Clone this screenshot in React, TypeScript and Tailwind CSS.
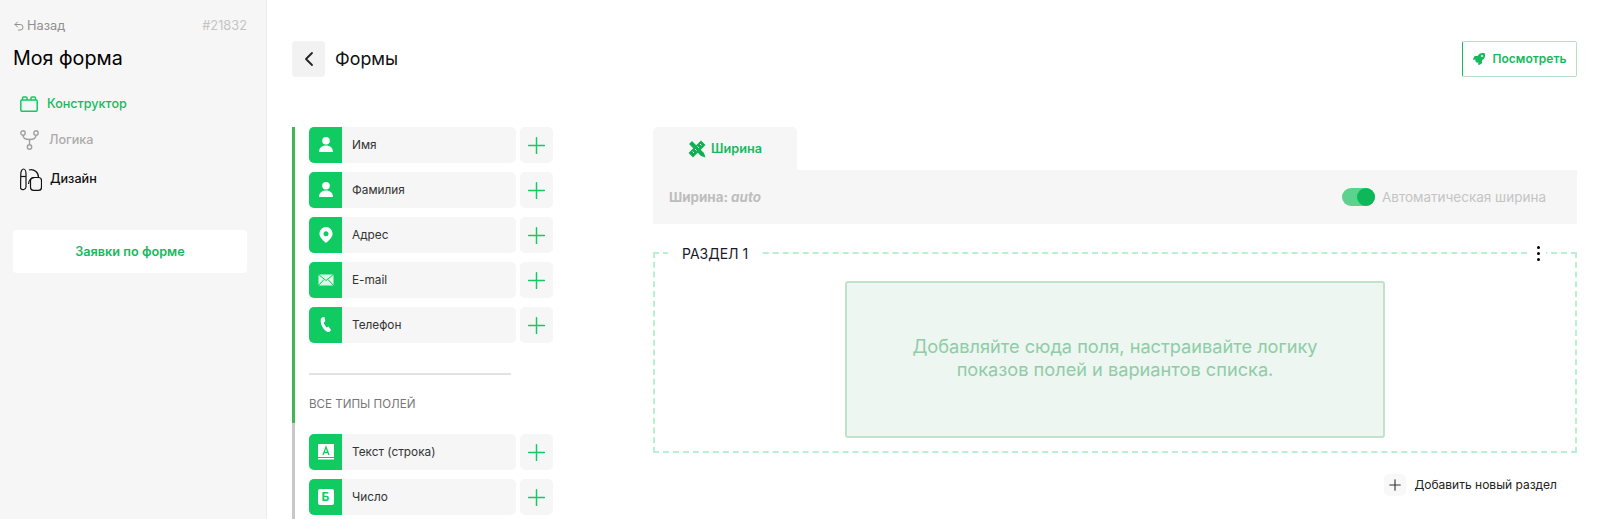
import { Plus, ChevronLeft, Undo2 } from "lucide-react";
import { FaRocket } from "react-icons/fa";
import type { ReactNode } from "react";

const UserIcon = () => (
  <svg viewBox="0 0 20 20" className="h-5 w-5" fill="#fff">
    <circle cx="10" cy="5.800" r="3.800" />
    <path d="M3 17c0-4.200 3-6.400 7-6.400s7 2.200 7 6.400z" />
  </svg>
);

const PinIcon = () => (
  <svg viewBox="0 0 20 20" className="h-5 w-5" fill="#fff">
    <path
      fillRule="evenodd"
      d="M10 2a6.600 6.600 0 0 1 6.600 6.600c0 3.600-3.600 7-6.600 9.400-3-2.400-6.600-5.800-6.600-9.400A6.600 6.600 0 0 1 10 2zm0 4.200a2.500 2.500 0 1 0 0 5 2.500 2.500 0 0 0 0-5z"
    />
  </svg>
);

const MailIcon = () => (
  <svg viewBox="0 0 20 20" className="h-5 w-5" fill="none">
    <rect x="2.500" y="4.500" width="15" height="11" rx="1" fill="#fff" fillOpacity="0.85" />
    <path d="M2.500 4.500 10 10.500l7.500-6M2.500 15.500 8 9.500M17.500 15.500 12 9.500" stroke="#0fcb62" strokeWidth="1" />
  </svg>
);

const PhoneIcon = () => (
  <svg viewBox="0 0 20 20" className="h-5 w-5" fill="#fff">
    <path d="M6.500 2.200 8.400 2l1 4.200-1.600 1c.3 2 1.300 3.800 2.900 5.200l1.700-.8 2.700 3.300-1.400 1.500c-.7.700-1.700.8-2.600.3C6.900 14 4.300 9.500 4.700 4.700c.1-1.100.8-2.100 1.800-2.500z" />
  </svg>
);

const TextIcon = () => (
  <svg viewBox="0 0 20 20" className="h-[20px] w-[20px]">
    <rect x="2" y="2" width="16" height="13" fill="#fff" />
    <rect x="2" y="16" width="16" height="1.500" fill="#fff" />
    <path d="M7 13 10 5l3 8M8 10.500h4" stroke="#0fcb62" strokeWidth="1.300" fill="none" />
  </svg>
);

const NumberIcon = () => (
  <span className="flex h-4 w-4 items-center justify-center rounded-[2px] bg-white text-[12px] leading-none font-bold text-[#0fcb62]">
    Б
  </span>
);

const fields: { label: string; icon: ReactNode }[] = [
  { label: "Имя", icon: <UserIcon /> },
  { label: "Фамилия", icon: <UserIcon /> },
  { label: "Адрес", icon: <PinIcon /> },
  { label: "E-mail", icon: <MailIcon /> },
  { label: "Телефон", icon: <PhoneIcon /> },
];

const allTypes: { label: string; icon: ReactNode }[] = [
  { label: "Текст (строка)", icon: <TextIcon /> },
  { label: "Число", icon: <NumberIcon /> },
];

function FieldRow({ label, icon }: { label: string; icon: ReactNode }) {
  return (
    <div className="flex h-9 shrink-0 gap-[4px]">
      <div className="flex w-[207px] overflow-hidden rounded-[5px] bg-[#f6f6f6]">
        <div className="flex w-[33px] items-center justify-center bg-[#0fcb62]">{icon}</div>
        <span className="pl-[10px] text-[11.800px] leading-[36px] text-[#333]">{label}</span>
      </div>
      <div className="flex w-[33px] items-center justify-center rounded-[5px] bg-[#f6f6f6]">
        <Plus className="h-[27px] w-[27px] text-[#0fcb62]" strokeWidth={1.300} />
      </div>
    </div>
  );
}

export default function App() {
  return (
    <div className="flex h-screen overflow-hidden bg-white font-['Inter',sans-serif]">
      {/* sidebar */}
      <aside className="flex w-[267px] shrink-0 flex-col border-r border-[#ececec] bg-[#f6f6f6] pr-[19px] pl-[13px]">
        <div className="mt-[19px] flex h-[14px] items-center justify-between">
          <div className="flex items-center gap-[2px] text-[12.800px] text-[#8f8f8f]">
            <Undo2 className="h-[12px] w-[12px]" strokeWidth={2} />
            Назад
          </div>
          <span className="text-[12.800px] text-[#c4c4c4]">#21832</span>
        </div>
        <h1 className="mt-[11px] text-[19.700px] leading-[28px] text-black">Моя форма</h1>

        <nav className="mt-[14px] flex flex-col pl-[7px]">
          <div className="flex h-[36px] items-center gap-[9px] text-[12.600px] font-medium text-[#16b95c]">
            <svg viewBox="0 0 18 16" className="h-4 w-[18px]" fill="none" stroke="#0fcb62" strokeWidth="1.500">
              <rect x="0.800" y="4" width="16.400" height="11.200" rx="1" />
              <path d="M2.500 4V2a1 1 0 0 1 1-1h2.500a1 1 0 0 1 1 1v2M11 4V2a1 1 0 0 1 1-1h2.500a1 1 0 0 1 1 1v2" />
            </svg>
            Конструктор
          </div>
          <div className="flex h-[36px] items-center gap-[10px] text-[12.600px] font-medium text-[#ababab]">
            <svg viewBox="0 0 19 20" className="h-5 w-[19px]" fill="none" stroke="#a0a0a0" strokeWidth="1.400">
              <circle cx="3" cy="3" r="2.200" />
              <circle cx="16" cy="3" r="2.200" />
              <circle cx="9.500" cy="17" r="2.200" />
              <path d="M3 5.200c0 3.300 2 4.300 6.500 4.300s6.500-1 6.500-4.300M9.500 9.500v5.300" />
            </svg>
            Логика
          </div>
          <div className="flex h-[42px] items-center gap-[8px] text-[12.600px] font-medium text-[#111]">
            <svg viewBox="0 0 22 23" className="h-[23px] w-[22px]" fill="none" stroke="#111" strokeWidth="1.200">
              <path d="M3.500 1C5 1 6 3.500 6 6v13a3 3 0 0 1-5.300 1.500C.5 20 .8 6 .8 6 .8 3.500 2 1 3.500 1z" />
              <path d="M1 8.500h5" />
              <path d="M9 2a7.500 7.500 0 0 1 9.500 7.500M8.500 16a7 7 0 0 1 6-6.500" />
              <rect x="10.500" y="9.500" width="11" height="12.800" rx="3" />
            </svg>
            Дизайн
          </div>
        </nav>

        <button className="mt-[30px] h-[43px] rounded-[4px] bg-white text-[12.700px] font-semibold text-[#16b95c]">
          Заявки по форме
        </button>
      </aside>

      {/* main */}
      <main className="flex min-w-0 flex-1 flex-col pt-[41px] pr-[23px] pl-[25px]">
        <header className="flex h-9 shrink-0 items-center justify-between">
          <div className="flex items-center gap-[10px]">
            <div className="flex h-9 w-[33px] items-center justify-center rounded-[4px] bg-[#f2f2f2]">
              <ChevronLeft className="h-6 w-6 text-[#222]" strokeWidth={1.800} />
            </div>
            <span className="text-[17.800px] text-[#111]">Формы</span>
          </div>
          <button className="flex h-9 w-[115px] items-center justify-center gap-[8px] rounded-[2px] border border-[#b5e2c4] border-l-[#16b95c] text-[12px] font-semibold text-[#16b95c]">
            <FaRocket className="h-[12px] w-[12px]" />
            Посмотреть
          </button>
        </header>

        <div className="mt-[50px] flex min-h-0 flex-1 gap-[100px]">
          {/* field palette */}
          <section className="flex w-[261px] shrink-0 overflow-hidden">
            <div className="mr-[14px] flex w-[3px] shrink-0 flex-col">
              <div className="h-[296px] shrink-0 bg-[#44b554]" />
              <div className="flex-1 bg-[#c8c8c8]" />
            </div>
            <div className="flex flex-1 flex-col">
              <div className="flex flex-col gap-[9px]">
                {fields.map((f) => (
                  <FieldRow key={f.label} label={f.label} icon={f.icon} />
                ))}
              </div>
              <div className="mt-[30px] h-[2px] w-[202px] shrink-0 bg-[#e2e2e2]" />
              <div className="mt-[21px] h-4 shrink-0 text-[11.600px] leading-4 text-[#777]">ВСЕ ТИПЫ ПОЛЕЙ</div>
              <div className="mt-[22px] flex flex-col gap-[9px]">
                {allTypes.map((f) => (
                  <FieldRow key={f.label} label={f.label} icon={f.icon} />
                ))}
              </div>
            </div>
          </section>

          {/* section editor */}
          <section className="flex min-w-0 flex-1 flex-col">
            <div className="flex h-[43px] w-[144px] shrink-0 items-center justify-center gap-[5px] rounded-t-[5px] bg-[#f6f6f6] text-[12.700px] font-semibold text-[#16b95c]">
              <svg viewBox="0 0 18 18" className="h-[18px] w-[18px]" fill="#10b052">
                <path d="M13 0.500 17.500 5 5 17.500 0.500 13z" />
                <path d="M1 4 4 1 8.500 5.500 5.500 8.500zM9.500 12.500l3-3L16 13l1.500 4.500L13 16z" />
                <path d="m12 4 1.500 1.500M9.500 6.500 11 8M7 9l1.500 1.500M4.500 11.500 6 13" stroke="#f6f6f6" strokeWidth="1" />
              </svg>
              Ширина
            </div>
            <div className="flex h-[54px] shrink-0 items-center justify-between bg-[#f6f6f6] pr-[31px] pl-[16px]">
              <span className="text-[13.400px] font-bold text-[#bdbdbd]">
                Ширина: <i>auto</i>
              </span>
              <div className="flex items-center gap-[7px]">
                <div className="relative h-[18px] w-[33px] rounded-full bg-[#5ad48d]">
                  <div className="absolute top-0 right-0 h-[18px] w-[18px] rounded-full bg-[#0db858]" />
                </div>
                <span className="text-[13.500px] text-[#c4c4c4]">Автоматическая ширина</span>
              </div>
            </div>

            <div className="relative mt-[28px] flex h-[201px] shrink-0 justify-center border-2 border-dashed border-[#b9f0d2] pt-[27px]">
              <span className="absolute -top-[8px] left-[13px] bg-white px-[14px] text-[14px] leading-4 text-[#1a1a2a]">
                РАЗДЕЛ 1
              </span>
              <span className="absolute -top-[8px] right-[29px] flex flex-col gap-[3px] bg-white px-[6px]">
                <i className="block h-[3px] w-[3px] rounded-full bg-black" />
                <i className="block h-[3px] w-[3px] rounded-full bg-black" />
                <i className="block h-[3px] w-[3px] rounded-full bg-black" />
              </span>
              <div className="flex h-[157px] w-[540px] items-center justify-center rounded-[3px] border-2 border-[#c1e3ce] bg-[#edf6f0] pb-[4px] text-center text-[18.200px] leading-[23px] text-[#8fcca8]">
                Добавляйте сюда поля, настраивайте логику
                <br />
                показов полей и вариантов списка.
              </div>
            </div>

            <div className="mt-[21px] flex items-center justify-end gap-[8px] pr-[20px] text-[12px] text-[#222]">
              <span className="flex h-[22px] w-[22px] items-center justify-center rounded-[5px] bg-[#f8f8f8]">
                <Plus className="h-[18px] w-[18px] text-[#333]" strokeWidth={1.500} />
              </span>
              Добавить новый раздел
            </div>
          </section>
        </div>
      </main>
    </div>
  );
}
